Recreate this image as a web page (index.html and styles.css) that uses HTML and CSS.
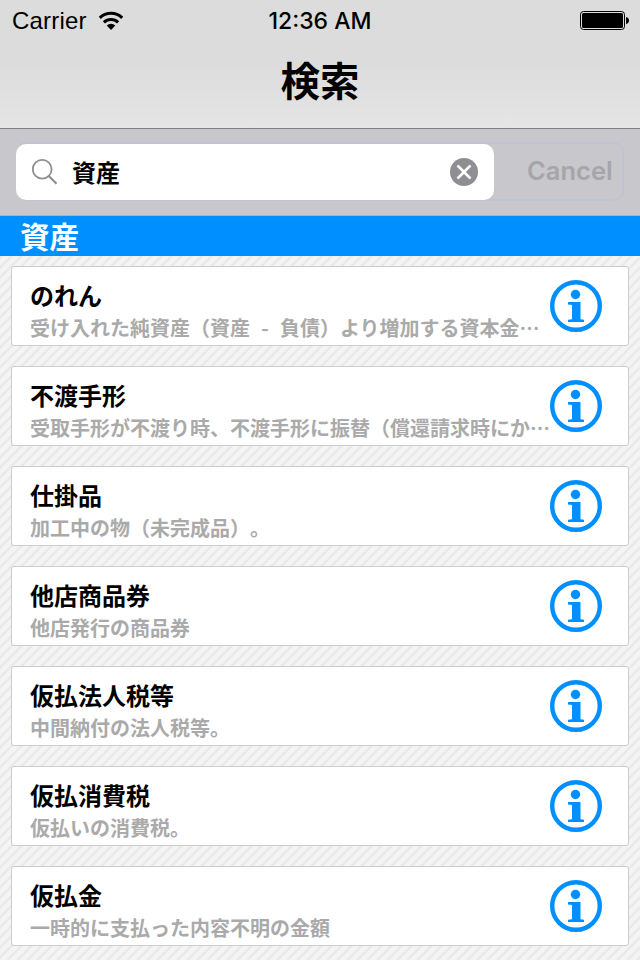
FILE: index.html
```html
<!DOCTYPE html>
<html lang="ja">

<head>
    <meta charset="UTF-8">
    <meta name="viewport" content="width=device-width, initial-scale=1.0">
    <title>検索</title>
    <link rel="stylesheet" href="styles.css">
</head>

<body>
    <svg class="defs" width="0" height="0">
        <symbol id="info" viewBox="0 0 52 52">
            <circle cx="26" cy="26" r="23.800" fill="none" stroke="#008fff" stroke-width="4.400" />
            <circle cx="25.500" cy="14.500" r="4.700" fill="#008fff" />
            <path d="M18 22h12.500v17.200l3.500.6V42H18v-2.200l4-.6V25l-4-.6z" fill="#008fff" />
        </symbol>
    </svg>

    <header class="header">
        <div class="status-bar">
            <div class="carrier">
                <span>Carrier</span>
                <svg width="26" height="20" viewBox="0 0 26 20">
                    <g fill="none" stroke="#000" stroke-width="3">
                        <path d="M1.800 6.900a16 16 0 0 1 22.400 0" />
                        <path d="M5.900 11.300a10.200 10.200 0 0 1 14.200 0" />
                    </g>
                    <path d="M13 19l-4.300-4.400a6.200 6.200 0 0 1 8.600 0z" />
                </svg>
            </div>
            <div class="clock">12:36 AM</div>
            <div class="battery">
                <svg width="50" height="20" viewBox="0 0 50 20">
                    <rect x="0.500" y="0.500" width="44" height="18" rx="3" fill="none" stroke="#000" />
                    <rect x="2" y="2" width="41" height="15" rx="1.500" />
                    <path d="M46 6c4 .5 4 6.500 0 7z" />
                </svg>
            </div>
        </div>
        <h1>検索</h1>
    </header>

    <div class="search-bar">
        <div class="search-outline">
            <div class="search-field">
                <svg class="search-icon" width="26" height="26" viewBox="0 0 26 26" fill="none" stroke="#8e8e93">
                    <circle cx="10.200" cy="10.300" r="9.400" stroke-width="1.800" />
                    <path d="M16.800 17l7.700 7.700" stroke-width="2.200" />
                </svg>
                <span class="search-text">資産</span>
                <svg width="28" height="28" viewBox="0 0 28 28">
                    <circle cx="14" cy="14" r="14" fill="#8e8e93" />
                    <path d="M7.500 7.500l13 13M20.500 7.500l-13 13" stroke="#fff" stroke-width="2.600" />
                </svg>
            </div>
            <span class="cancel">Cancel</span>
        </div>
    </div>

    <h2 class="section-title">資産</h2>

    <ul class="list">
        <li class="card">
            <div class="card-text">
                <h3>のれん</h3>
                <p>受け入れた純資産（資産<span class="dash">-</span>負債）より増加する資本金…</p>
            </div>
            <svg class="info"><use href="#info" /></svg>
        </li>
        <li class="card">
            <div class="card-text">
                <h3>不渡手形</h3>
                <p>受取手形が不渡り時、不渡手形に振替（償還請求時にか…</p>
            </div>
            <svg class="info"><use href="#info" /></svg>
        </li>
        <li class="card">
            <div class="card-text">
                <h3>仕掛品</h3>
                <p>加工中の物（未完成品）。</p>
            </div>
            <svg class="info"><use href="#info" /></svg>
        </li>
        <li class="card">
            <div class="card-text">
                <h3>他店商品券</h3>
                <p>他店発行の商品券</p>
            </div>
            <svg class="info"><use href="#info" /></svg>
        </li>
        <li class="card">
            <div class="card-text">
                <h3>仮払法人税等</h3>
                <p>中間納付の法人税等。</p>
            </div>
            <svg class="info"><use href="#info" /></svg>
        </li>
        <li class="card">
            <div class="card-text">
                <h3>仮払消費税</h3>
                <p>仮払いの消費税。</p>
            </div>
            <svg class="info"><use href="#info" /></svg>
        </li>
        <li class="card">
            <div class="card-text">
                <h3>仮払金</h3>
                <p>一時的に支払った内容不明の金額</p>
            </div>
            <svg class="info"><use href="#info" /></svg>
        </li>
    </ul>
</body>

</html>
```
FILE: styles.css
```css
* {
    box-sizing: border-box;
}

body {
    margin: 0;
    height: 960px;
    overflow: hidden;
    font-family: "Noto Sans CJK JP", sans-serif;
    font-weight: bold;
    text-spacing-trim: space-all;
    color: #000;
    background: repeating-linear-gradient(135deg, #f4f4f4 0, #f4f4f4 3.5px, #e8e8e8 5px, #e8e8e8 6px, #f4f4f4 7.07px);
}

h1,
h2,
h3,
p {
    margin: 0;
}

.defs {
    display: block;
}

.header {
    height: 129px;
    background: linear-gradient(#dcdcdc 50%, #e5e5e5);
    border-bottom: 1px solid #808080;
}

.status-bar {
    display: grid;
    grid-template-columns: 1fr auto 1fr;
    align-items: center;
    height: 40px;
    padding: 2px 10px 0 12px;
    font-family: "Liberation Sans", Arial, sans-serif;
    font-size: 24px;
    font-weight: normal;
    letter-spacing: 0.2px;
}

.carrier {
    display: flex;
    align-items: center;
    gap: 11px;
}

.clock {
    margin-right: 2px;
    font-family: Inter, sans-serif;
    font-size: 23px;
    font-weight: 500;
    letter-spacing: 0;
}

.battery {
    display: flex;
    justify-content: flex-end;
}

.header h1 {
    font-size: 39.5px;
    line-height: 78px;
    text-align: center;
}

.search-bar {
    height: 87px;
    padding: 13px 16px 0;
    background-color: #c8c7cc;
    border-bottom: 1px solid #b2b2b8;
}

.search-outline {
    display: flex;
    align-items: center;
    height: 59px;
    border: 2px solid #c0c4d0;
    border-left: 0;
    border-radius: 10px;
}

.search-field {
    display: flex;
    align-items: center;
    width: 478px;
    height: 56px;
    padding: 0 16px;
    background-color: #fff;
    border-radius: 10px;
}

.search-text {
    flex: 1;
    margin-left: 14px;
    font-size: 24px;
    line-height: 54px;
}

.cancel {
    margin: 0 0 2px 33px;
    font-family: Inter, sans-serif;
    font-size: 25.5px;
    font-weight: 600;
    color: #a5a5aa;
}

.section-title {
    height: 40px;
    padding-left: 20px;
    background-color: #008fff;
    color: #fff;
    font-size: 29.5px;
    line-height: 38px;
}

.list {
    display: flex;
    flex-direction: column;
    gap: 20px;
    margin: 0;
    padding: 10px 11px 0;
    list-style: none;
}

.card {
    display: flex;
    flex-shrink: 0;
    height: 80px;
    padding-left: 18px;
    background-color: #fff;
    border: 1px solid #ccc;
    border-radius: 3px;
}

.card-text {
    width: 520px;
    padding-top: 11px;
    white-space: nowrap;
}

.card h3 {
    font-size: 24px;
    line-height: 34px;
}

.card p {
    font-size: 20px;
    line-height: 32px;
    color: #aaa;
}

.dash {
    display: inline-block;
    width: 30px;
    text-align: center;
}

.info {
    flex-shrink: 0;
    width: 52px;
    height: 52px;
    margin-top: 13px;
}
```
